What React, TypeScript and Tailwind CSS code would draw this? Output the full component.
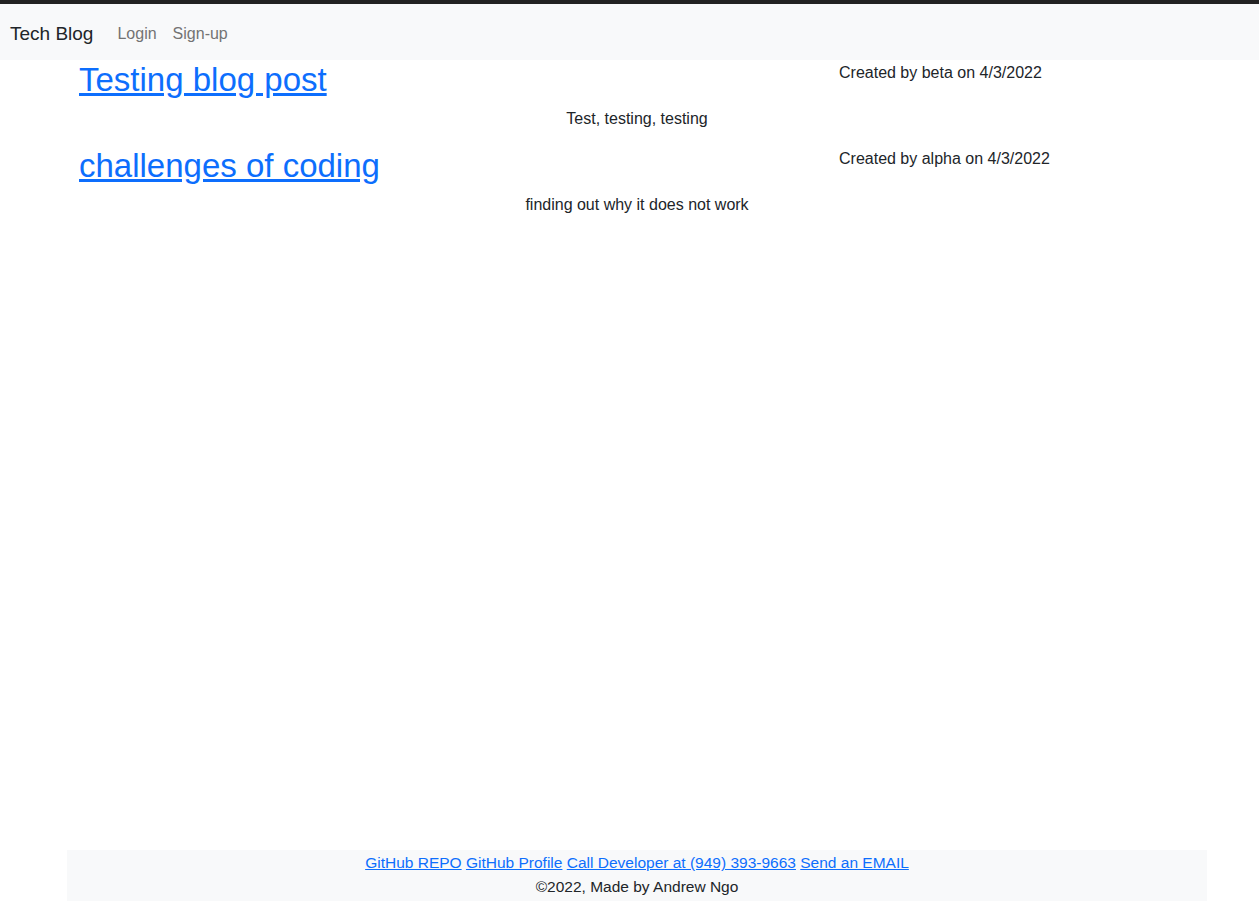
const posts = [
  { title: 'Testing blog post', author: 'beta', date: '4/3/2022', body: 'Test, testing, testing' },
  { title: 'challenges of coding', author: 'alpha', date: '4/3/2022', body: 'finding out why it does not work' },
];

function Navbar() {
  return (
    <header className="border-t-4 border-[#222]">
      <nav className="flex h-[56px] items-center bg-[#f8f9fa] px-[10px] pt-[3px]">
        <a href="#" className="mr-4 text-[19px] leading-[30px] text-[#212529]">
          Tech Blog
        </a>
        <a href="#" className="px-2 text-[16px] text-[#737373]">Login</a>
        <a href="#" className="px-2 text-[16px] text-[#737373]">Sign-up</a>
      </nav>
    </header>
  );
}

function Post({ post }: { post: (typeof posts)[number] }) {
  return (
    <article>
      <div className="flex">
        <h2 className="mb-2 w-[760px] text-[33px] leading-[38px]">
          <a href="#" className="text-[#0d6efd] underline">{post.title}</a>
        </h2>
        <p className="text-[16px] leading-6 text-[#212529]">
          Created by {post.author} on {post.date}
        </p>
      </div>
      <p className="mb-4 text-center text-[16px] leading-6 text-[#212529]">{post.body}</p>
    </article>
  );
}

export default function App() {
  return (
    <div
      className="flex min-h-screen flex-col bg-white"
      style={{ fontFamily: '"Liberation Sans", Arial, sans-serif' }}
    >
      <Navbar />
      <main className="ml-[67px] w-[1140px] flex-1 px-3 pt-[1px]">
        {posts.map((post) => (
          <Post key={post.title} post={post} />
        ))}
      </main>
      <footer className="ml-[67px] w-[1140px] bg-[#f8f9fa] pt-[1px] pb-[2px] text-center text-[15.5px] leading-6 text-[#212529]">
        <div>
          <a href="#" className="text-[#0d6efd] underline">GitHub REPO</a>{' '}
          <a href="#" className="text-[#0d6efd] underline">GitHub Profile</a>{' '}
          <a href="#" className="text-[#0d6efd] underline">Call Developer at (949) 393-9663</a>{' '}
          <a href="#" className="text-[#0d6efd] underline">Send an EMAIL</a>
        </div>
        <div>©2022, Made by Andrew Ngo</div>
      </footer>
    </div>
  );
}
